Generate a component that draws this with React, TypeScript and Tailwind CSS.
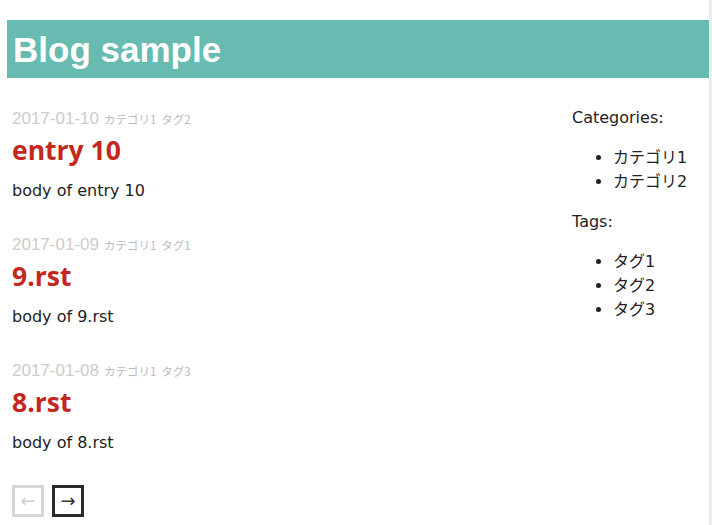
const posts = [
  { date: "2017-01-10", category: "カテゴリ1", tag: "タグ2", title: "entry 10", body: "body of entry 10" },
  { date: "2017-01-09", category: "カテゴリ1", tag: "タグ1", title: "9.rst", body: "body of 9.rst" },
  { date: "2017-01-08", category: "カテゴリ1", tag: "タグ3", title: "8.rst", body: "body of 8.rst" },
];

const categories = ["カテゴリ1", "カテゴリ2"];
const tags = ["タグ1", "タグ2", "タグ3"];

const bodyFont = "font-['DejaVu_Sans','Noto_Sans_CJK_JP',sans-serif]";

export default function App() {
  return (
    <div className="flex min-h-[525px] bg-white text-[#222]">
      <div className="flex-1 pl-[7px] pt-5">
        <header className="flex h-[58px] items-center bg-[#67bbb0] px-[6px]">
          <h1 className="font-['Liberation_Sans',Arial,sans-serif] text-[35px] font-bold leading-none text-white">
            Blog sample
          </h1>
        </header>

        <div className="flex pl-[5px]">
          <main className="flex-1 pt-[31px]">
            {posts.map((post) => (
              <article key={post.title} className="mb-8">
                <div className="flex items-baseline gap-[5px] leading-5 text-[#cccccc]">
                  <span className="font-['Liberation_Sans',Arial,sans-serif] text-[17px]">{post.date}</span>
                  <span className="flex gap-[5px] font-['Noto_Sans_CJK_JP',sans-serif] text-[11.5px] text-[#bbbbbb]">
                    <span>{post.category}</span>
                    <span>{post.tag}</span>
                  </span>
                </div>
                <h2 className="mt-[5px] font-['Open_Sans','Noto_Sans_CJK_JP',sans-serif] text-[26.5px] font-bold leading-8 text-[#c3281f]">
                  {post.title}
                </h2>
                <p className={`mt-[13px] ${bodyFont} text-base leading-6`}>{post.body}</p>
              </article>
            ))}

            <nav className="-mt-[2px] flex gap-2">
              <span className="flex size-8 items-center justify-center border-[3px] border-[#d6d6d6] font-['DejaVu_Sans',sans-serif] text-lg leading-none text-[#cfcfcf]">
                ←
              </span>
              <span className="flex size-8 items-center justify-center border-[3px] border-[#2a2a2a] font-['DejaVu_Sans',sans-serif] text-lg leading-none text-[#333]">
                →
              </span>
            </nav>
          </main>

          <aside className={`w-[137px] pt-[28px] ${bodyFont} text-base leading-6`}>
            <p>Categories:</p>
            <ul className="my-4 list-disc pl-[41px]">
              {categories.map((c) => (
                <li key={c}>{c}</li>
              ))}
            </ul>
            <p>Tags:</p>
            <ul className="my-4 list-disc pl-[41px]">
              {tags.map((t) => (
                <li key={t}>{t}</li>
              ))}
            </ul>
          </aside>
        </div>
      </div>
      <div className="w-[3px] bg-[#ededed]" />
    </div>
  );
}
